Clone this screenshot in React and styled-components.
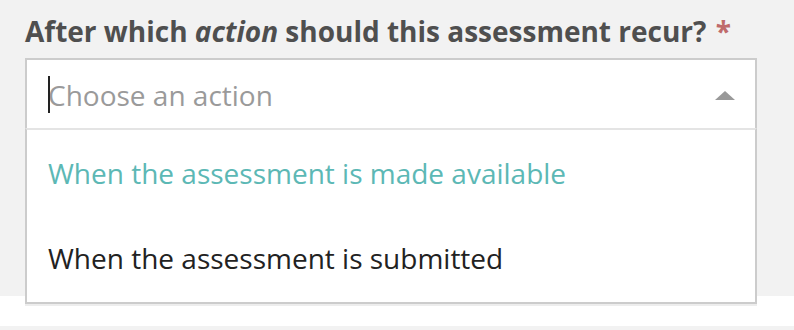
import React from "react";
import styled, { createGlobalStyle } from "styled-components";

const GlobalStyle = createGlobalStyle`
  html, body {
    margin: 0;
    padding: 0;
    background: #ffffff;
    font-family: "Open Sans", "Liberation Sans", sans-serif;
  }
`;

const Page = styled.div`
  width: 794px;
  height: 330px;
  background: #ffffff;
  display: flex;
  flex-direction: column;
`;

const Panel = styled.section`
  background: #f2f2f2;
  height: 296px;
  padding: 12px 37px 0 25px;
  box-sizing: border-box;
  flex-shrink: 0;
`;

const Gap = styled.div`
  height: 30px;
  background: #ffffff;
  flex-shrink: 0;
`;

const NextPanel = styled.section`
  flex: 1;
  background: #f2f2f2;
`;

const Label = styled.label`
  display: block;
  font-size: 28px;
  line-height: 38px;
  font-weight: 700;
  color: #4f4f4f;
  margin-bottom: 8px;
  white-space: nowrap;

  em {
    font-style: italic;
  }
`;

const Required = styled.span`
  color: #bf6b6b;
  margin-left: 2px;
`;

const Select = styled.div`
  position: relative;
  background: #ffffff;
  border: 2px solid #cccccc;
  border-bottom: none;
`;

const Control = styled.div`
  height: 68px;
  display: flex;
  align-items: center;
  padding: 0 20px 0 21px;
  box-sizing: border-box;
`;

const Caret = styled.span`
  width: 2px;
  height: 37px;
  background: #222222;
  margin-right: -2px;
  position: relative;
  z-index: 1;
`;

const Placeholder = styled.span`
  flex: 1;
  font-size: 28px;
  color: #9a9a9a;
  padding-top: 1px;
`;

const Arrow = styled.span`
  width: 0;
  height: 0;
  border-left: 10px solid transparent;
  border-right: 10px solid transparent;
  border-bottom: 9px solid #999999;
  margin-top: 2px;
`;

const Menu = styled.ul`
  position: absolute;
  top: 100%;
  left: -2px;
  right: -2px;
  margin: 0;
  padding: 0;
  list-style: none;
  background: #ffffff;
  border: 2px solid #cccccc;
  border-top: 2px solid #e4e4e4;
  box-shadow: 0 2px 0 #ededed;
  z-index: 5;
`;

const Option = styled.li`
  height: ${(p) => (p.$active ? "86px" : "86px")};
  display: flex;
  align-items: center;
  padding: 0 21px;
  font-size: 28px;
  color: ${(p) => (p.$active ? "#5cb8b5" : "#222222")};
  padding-bottom: ${(p) => (p.$active ? "0" : "3px")};
  box-sizing: border-box;
`;

export default function App() {
  return (
    <Page>
      <GlobalStyle />
      <Panel>
        <Label>
          After which <em>action</em> should this assessment recur?
          <Required> *</Required>
        </Label>
        <Select>
          <Control>
            <Caret />
            <Placeholder>Choose an action</Placeholder>
            <Arrow />
          </Control>
          <Menu>
            <Option $active>When the assessment is made available</Option>
            <Option>When the assessment is submitted</Option>
          </Menu>
        </Select>
      </Panel>
      <Gap />
      <NextPanel />
    </Page>
  );
}
